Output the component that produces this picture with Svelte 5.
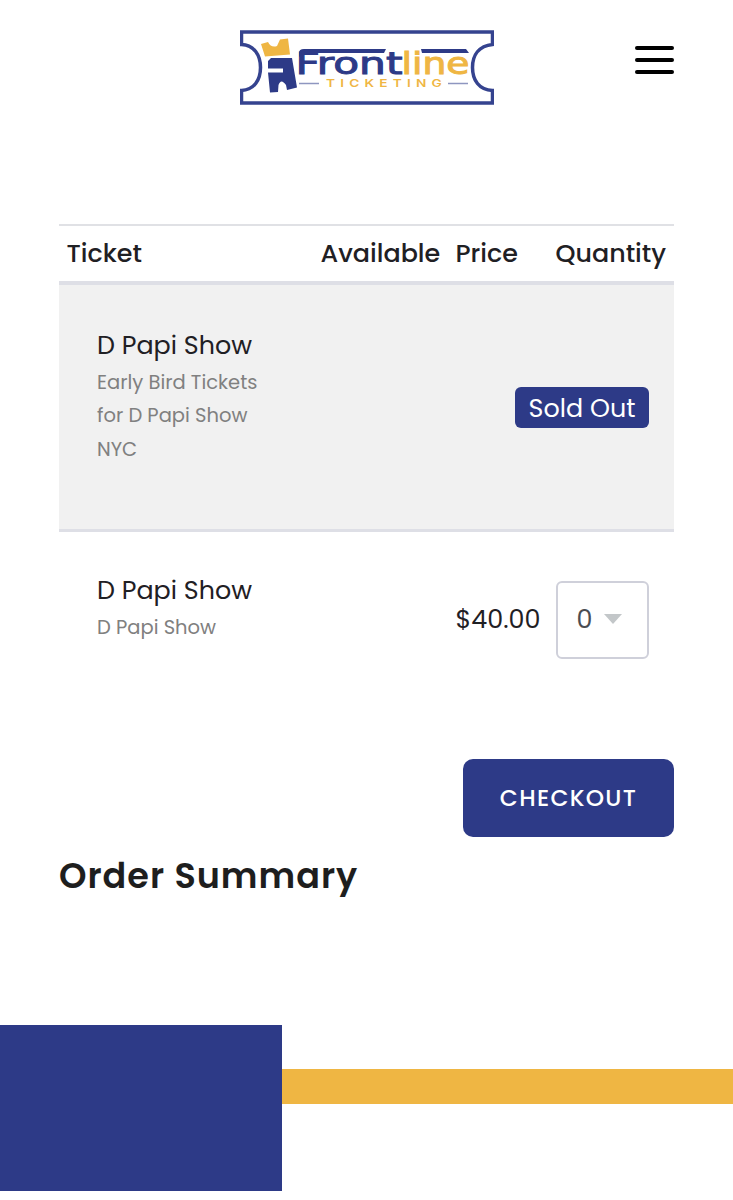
<script lang="ts">
  interface Ticket {
    id: number;
    name: string;
    description: string;
    price: string;
    soldOut: boolean;
  }

  const tickets: Ticket[] = [
    {
      id: 1,
      name: "D Papi Show",
      description: "Early Bird Tickets for D Papi Show NYC",
      price: "",
      soldOut: true,
    },
    {
      id: 2,
      name: "D Papi Show",
      description: "D Papi Show",
      price: "$40.00",
      soldOut: false,
    },
  ];

  let quantity = 0;

  const increase = () => {
    quantity = (quantity + 1) % 10;
  };
</script>

<header>
  <svg class="logo" viewBox="0 0 254 75" width="254" height="75">
    <path
      class="outline"
      d="M1.500 2H252.500V14.500C239 16 232.500 25 232.500 37.500S239 60 252.500 60.500V73H1.500V60.500C14 60 20.500 50 20.500 37.500S14 15 1.500 14.500Z"
    />
    <path class="gold" d="M21 14L28 12Q31 18 37 16L40 9.500L48 8.500L50 24.500L25 26.500Z" />
    <path
      class="blue"
      d="M28 31L31 28H52L57 57.500L47 60L46 55Q41 48 38.500 55L38 62L30 62.500L28 42.500H43V38.500H28Z"
    />
    <path class="blue" d="M59 27V23Q59 19 64 19H146L144 23H64ZM181 19H226L229 23H182Z" />
    <text class="blue word" x="55.500" y="44" textLength="107" lengthAdjust="spacingAndGlyphs">Front</text>
    <text class="gold word" x="161.500" y="44" textLength="68" lengthAdjust="spacingAndGlyphs">line</text>
    <path class="rule" d="M59 53.500H79M208 53.500H228" />
    <text class="gold sub" x="86" y="56.500" textLength="121" lengthAdjust="spacingAndGlyphs">TICKETING</text>
  </svg>
  <button class="menu" aria-label="Menu">
    <span></span>
    <span></span>
    <span></span>
  </button>
</header>

<main>
  <div class="table">
    <div class="row head">
      <div>Ticket</div>
      <div>Available</div>
      <div>Price</div>
      <div>Quantity</div>
    </div>
    {#each tickets as ticket (ticket.id)}
      <div class="row" class:sold={ticket.soldOut}>
        <div class="info">
          <div class="name">{ticket.name}</div>
          <div class="description">{ticket.description}</div>
        </div>
        {#if ticket.soldOut}
          <div class="status"><span class="badge">Sold Out</span></div>
        {:else}
          <div class="amount">{ticket.price}</div>
          <div>
            <button class="select" on:click={increase}>
              <span>{quantity}</span>
              <svg width="18" height="11" viewBox="0 0 18 11"><path d="M0 0H18L9 10Z" /></svg>
            </button>
          </div>
        {/if}
      </div>
    {/each}
  </div>
  <button class="checkout">CHECKOUT</button>
  <h2>Order Summary</h2>
</main>

<footer>
  <div class="block"></div>
  <div class="bar"></div>
</footer>

<style>
  :global(body) {
    background: #fff;
    color: #1f2024;
    font-family: Poppins, Inter, "Open Sans", sans-serif;
  }

  button {
    border: 0;
    padding: 0;
    font: inherit;
    cursor: pointer;
  }

  header {
    display: grid;
    grid-template-columns: 1fr 254px 1fr;
    padding: 30px 59px 0;
    height: 194px;
    box-sizing: border-box;
    align-items: start;
  }

  .logo {
    grid-column: 2;
  }

  .outline {
    fill: none;
    stroke: #35438f;
    stroke-width: 3.5;
  }

  .blue {
    fill: #2d3a87;
  }

  .gold {
    fill: #efb643;
  }

  .rule {
    stroke: #8e96c0;
    stroke-width: 1.5;
  }

  .word {
    font-family: "DejaVu Sans", sans-serif;
    font-size: 31px;
    stroke-width: 1;
  }

  .word.blue {
    stroke: #2d3a87;
  }

  .word.gold {
    stroke: #efb643;
  }

  .sub {
    font-family: Inter, sans-serif;
    font-size: 10.5px;
    font-weight: 600;
    letter-spacing: 4px;
  }

  .menu {
    display: flex;
    flex-direction: column;
    justify-self: end;
    gap: 8px;
    width: 39px;
    margin-top: 16px;
    background: none;
  }

  .menu span {
    height: 4px;
    border-radius: 2px;
    background: #000;
  }

  main {
    display: flex;
    flex-direction: column;
    padding: 30px 59px 0;
  }

  .table {
    border-top: 2px solid #e0e1e5;
    font-size: 25.4px;
  }

  .row {
    display: grid;
    grid-template-columns: 254px 135px 100px 1fr;
    height: 227px;
    box-sizing: border-box;
  }

  .row > div {
    padding-left: 7.5px;
  }

  .head {
    height: 59px;
    border-bottom: 4px solid #dedfe6;
    font-weight: 500;
    line-height: 54px;
  }

  .row > .info {
    padding: 39px 46px 0 38px;
  }

  .sold {
    height: 247px;
    border-bottom: 3px solid #dedfe6;
    background: #f1f1f1;
  }

  .sold > .info {
    padding-top: 41px;
  }

  .name {
    line-height: 39px;
  }

  .description {
    margin-top: 1px;
    color: #808080;
    font-size: 19.5px;
    line-height: 33.3px;
  }

  .status {
    grid-column: 2 / 5;
    justify-self: end;
    align-self: center;
    padding-right: 25px;
  }

  .badge {
    display: block;
    width: 134px;
    height: 41px;
    border-radius: 6px;
    background: #2d3a87;
    color: #fff;
    line-height: 42px;
    text-align: center;
  }

  .amount {
    grid-column: 3;
    padding-top: 68px;
    line-height: 38px;
  }

  .select {
    display: flex;
    align-items: center;
    gap: 12px;
    width: 93px;
    height: 78px;
    margin-top: 49px;
    padding: 0 0 2px 19px;
    border: 2px solid #cfd0da;
    border-radius: 6px;
    background: #fff;
    color: #4b4d52;
  }

  .select path {
    fill: #c3c7c9;
  }

  .checkout {
    align-self: flex-end;
    width: 211px;
    height: 78px;
    border-radius: 10px;
    background: #2d3a87;
    color: #fff;
    font-size: 23.3px;
    font-weight: 500;
    letter-spacing: 1.3px;
  }

  h2 {
    margin: 12px 0 0;
    color: #1e1e1e;
    font-size: 35px;
    font-weight: 600;
    line-height: 54px;
    letter-spacing: 1px;
  }

  footer {
    display: grid;
    grid-template-columns: 281.5px 1fr;
    margin-top: 122px;
  }

  .block {
    height: 166px;
    background: #2d3a87;
  }

  .bar {
    height: 35.5px;
    margin-top: 43.5px;
    background: #efb643;
  }
</style>
